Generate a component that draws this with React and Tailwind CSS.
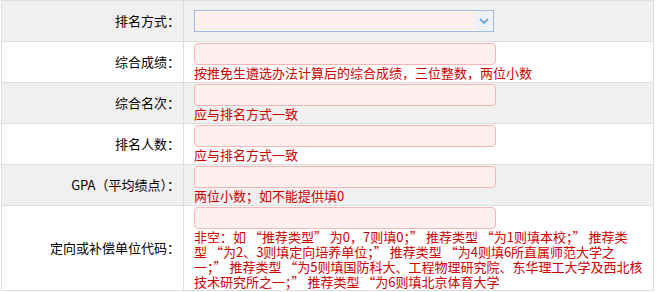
import React from 'react'

const rows = [
  { label: '综合成绩：', hint: ['按推免生遴选办法计算后的综合成绩，三位整数，两位小数'] },
  { label: '综合名次：', hint: ['应与排名方式一致'] },
  { label: '排名人数：', hint: ['应与排名方式一致'] },
  { label: 'GPA（平均绩点）：', hint: ['两位小数；如不能提供填0'] },
  {
    label: '定向或补偿单位代码：',
    hint: [
      '非空：如 “推荐类型” 为0，7则填0；” 推荐类型 “为1则填本校；” 推荐类',
      '型 “为2、3则填定向培养单位；” 推荐类型 “为4则填6所直属师范大学之',
      '一；” 推荐类型 “为5则填国防科大、工程物理研究院、东华理工大学及西北核',
      '技术研究所之一；” 推荐类型 “为6则填北京体育大学',
    ],
  },
]

function Field({ hint }) {
  const multi = hint.length > 1
  return (
    <div>
      <div className="w-[302px] h-[22px] rounded-[4px] border border-[#f4b6b6] bg-[#fff0f0]"></div>
      <div className={`text-[13px] text-[#cc0000] whitespace-nowrap ${multi ? 'leading-[15px]' : 'leading-[16px]'}`}>
        {hint.map((line, i) => (
          <div key={i}>{line}</div>
        ))}
      </div>
    </div>
  )
}

export default function App() {
  return (
    <div className="bg-white w-[657px] h-[292px] font-['Noto_Sans_CJK_SC','Noto_Sans',sans-serif]">
      <table className="ml-[1px] w-[653px] border-collapse">
        <tbody>
          <tr className="bg-[#f0f0f0] h-[41px]">
            <td className="w-[182px] border border-[#dedede] text-right pr-[3px] text-[13px] text-black align-middle">排名方式：</td>
            <td className="border border-[#dedede] pl-[10px] align-middle">
              <div className="w-[300px] h-[22px] border border-[#9fbde0] bg-[#fff0f0] flex justify-end">
                <div className="w-[18px] h-full bg-[#eef2f8] flex items-center justify-center">
                  <svg width="10" height="6" viewBox="0 0 10 6">
                    <path d="M1 1 L5 5 L9 1" fill="none" stroke="#6ea4d6" strokeWidth="1.8" />
                  </svg>
                </div>
              </div>
            </td>
          </tr>
          {rows.map((row, i) => (
            <tr key={row.label} className={i % 2 === 1 ? 'bg-[#f0f0f0]' : 'bg-white'}>
              <td className="border border-[#dedede] text-right pr-[3px] text-[13px] text-black align-middle">{row.label}</td>
              <td className="border border-[#dedede] pl-[10px] pt-[1px] pb-[1px] align-top">
                <Field hint={row.hint} />
              </td>
            </tr>
          ))}
        </tbody>
      </table>
    </div>
  )
}
